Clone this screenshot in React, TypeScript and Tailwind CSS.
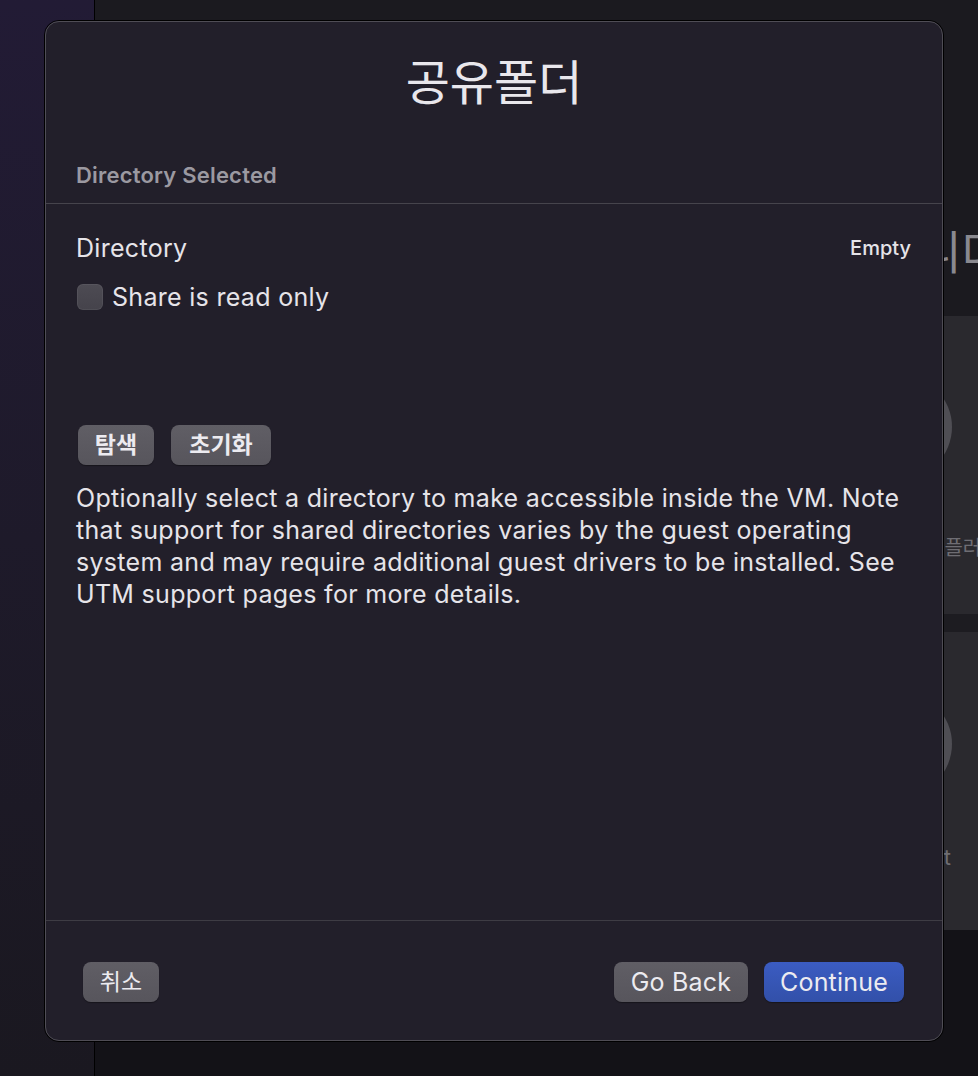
import React from "react";

const SANS = "font-['Inter','Noto_Sans_CJK_KR',sans-serif]";

function SheetButton({
  children,
  blue = false,
  className = "",
}: {
  children: React.ReactNode;
  blue?: boolean;
  className?: string;
}) {
  return (
    <button
      className={`h-[40px] rounded-[8px] leading-none text-[#ecebf0] shadow-[0_1px_1px_rgba(0,0,0,0.35)] ${
        blue
          ? "bg-gradient-to-b from-[#3b5cc2] to-[#3250a9]"
          : "bg-gradient-to-b from-[#605e65] to-[#57555c]"
      } ${className}`}
    >
      {children}
    </button>
  );
}

export default function App() {
  return (
    <div
      className={`relative flex w-[978px] h-[1076px] overflow-hidden bg-[#19181d] ${SANS}`}
    >
      {/* sidebar of the window behind */}
      <div className="w-[95px] shrink-0 border-r border-black bg-gradient-to-b from-[#221b35] via-[#1e1a2a] to-[#1a1820]" />

      {/* main area of the window behind */}
      <div className="flex-1 flex flex-col overflow-hidden">
        <div className="h-[316px] shrink-0 flex flex-col justify-end bg-[#1b1a1f]">
          <div className="flex justify-end mr-[-26px] mb-[35px]">
            <span className="text-[46px] leading-[58px] text-[#8a898f]">
              설정합니다
            </span>
          </div>
        </div>
        <div className="flex flex-col gap-[18px] mr-[-20px] bg-[#1d1c21]">
          <div className="h-[298px] bg-[#2a292e] flex justify-end pr-[46px] pt-[59px]">
            <div className="flex flex-col w-[104px]">
              <div className="w-[104px] h-[104px] rounded-full bg-[#4f4e54]" />
              <span className="self-end mr-[-66px] mt-[54px] whitespace-nowrap text-[20px] text-[#6e6d73]">
                에뮬레이터 플러그인
              </span>
            </div>
          </div>
          <div className="h-[298px] bg-[#2a292e] flex justify-end pr-[46px] pt-[60px]">
            <div className="flex flex-col w-[104px]">
              <div className="w-[104px] h-[104px] rounded-full bg-[#4f4e54]" />
              <span className="self-end mr-[1px] mt-[46px] whitespace-nowrap text-[22px] leading-[30px] text-[#6e6d73]">
                Import Project
              </span>
            </div>
          </div>
        </div>
        <div className="flex-1 bg-[#131217]" />
      </div>

      {/* sheet */}
      <div className="absolute left-[44px] top-[20px] w-[900px] h-[1022px] rounded-[15px] border border-black">
        <div className="flex flex-col h-full rounded-[14px] border border-[#4f4d55] bg-[#221f2a] overflow-hidden">
          {/* header */}
          <div className="h-[181px] shrink-0 flex flex-col px-[30px]">
            <h1 className="mt-[33px] text-center text-[48px] leading-[56px] font-normal text-[#e9e7ec]">
              공유폴더
            </h1>
            <p className="mt-[50px] text-[22px] leading-[28px] font-semibold tracking-[0.2px] text-[#9b99a1]">
              Directory Selected
            </p>
          </div>
          <div className="h-px shrink-0 bg-[#46444c]" />

          {/* content */}
          <div className="flex-1 flex flex-col px-[30px] pr-[31px] text-[25px] tracking-[0.3px] text-[#e6e4e9]">
            <div className="mt-[29px] flex items-center justify-between">
              <span className="leading-[30px]">Directory</span>
              <span className="text-[20px] leading-[30px] font-medium tracking-normal">
                Empty
              </span>
            </div>
            <label className="mt-[19px] flex items-center gap-[9px]">
              <span className="ml-[1px] w-[26px] h-[26px] rounded-[6px] bg-gradient-to-b from-[#4d4b53] to-[#45434b] shadow-[inset_0_0_0_1px_rgba(255,255,255,0.06)]" />
              <span className="leading-[30px]">Share is read only</span>
            </label>
            <div className="mt-[113px] ml-[2px] flex gap-[17px] tracking-normal">
              <SheetButton className="w-[76px] text-[23px] font-semibold">탐색</SheetButton>
              <SheetButton className="w-[100px] text-[23px] font-semibold">초기화</SheetButton>
            </div>
            <p className="mt-[17px] leading-[32px]">
              Optionally select a directory to make accessible inside the VM. Note
              <br />
              that support for shared directories varies by the guest operating
              <br />
              system and may require additional guest drivers to be installed. See
              <br />
              UTM support pages for more details.
            </p>
          </div>

          <div className="h-px shrink-0 bg-[#3e3c44]" />
          {/* footer */}
          <div className="h-[119px] shrink-0 flex items-start pt-[41px] pl-[37px] pr-[38px]">
            <SheetButton className="w-[76px] text-[23px]">취소</SheetButton>
            <div className="ml-auto flex gap-[16px] text-[25px] tracking-[0.2px]">
              <SheetButton className="w-[134px]">Go Back</SheetButton>
              <SheetButton blue className="w-[140px]">
                Continue
              </SheetButton>
            </div>
          </div>
        </div>
      </div>
    </div>
  );
}
